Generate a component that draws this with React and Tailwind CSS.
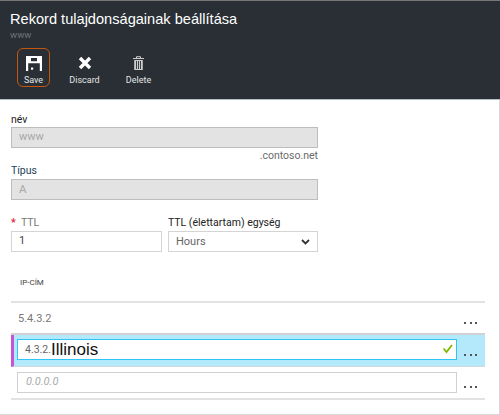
import React from "react";

const f = { fontFamily: 'Roboto, "Liberation Sans", sans-serif' };
const Dots = () => (
  <div className="w-[28px] flex items-center gap-[3.5px] pl-[7px] pt-[9px] shrink-0">
    <span className="w-[2px] h-[2px] bg-[#555]" />
    <span className="w-[2px] h-[2px] bg-[#555]" />
    <span className="w-[2px] h-[2px] bg-[#555]" />
  </div>
);

function Tool({ label, children, active }) {
  return (
    <div className={`w-[33px] h-[39px] flex flex-col items-center rounded-[6px] ${active ? "border border-[#c4560f]" : "border border-transparent"}`}>
      <div className="h-[22px] flex items-end justify-center">{children}</div>
      <span className="text-[9px] leading-[12px] mt-[3px] text-[#e4e6e8] whitespace-nowrap">{label}</span>
    </div>
  );
}

export default function App() {
  return (
    <div className="w-[500px] h-[415px] bg-white overflow-hidden flex flex-col" style={f}>
      <div className="h-[99px] bg-[#292f35] border-t border-[#777] shrink-0 pl-[10px]">
        <div className="text-[14.6px] leading-[20px] text-white mt-[8px]" style={{ fontFamily: '"Liberation Sans", sans-serif' }}>Rekord tulajdonságainak beállítása</div>
        <div className="text-[9.5px] leading-[10px] text-[#6f757a] mt-[1px]">www</div>
        <div className="flex mt-[8px] pl-[7px]">
          <Tool label="Save" active>
            <svg width="16" height="15" viewBox="0 0 16 15">
              <path fillRule="evenodd" d="M0 0h16v15h-2.2V7.2H2.2V15H0zM5 2v3.2h6V2z" fill="#fff" />
              <rect x="5" y="11.5" width="2.2" height="2.2" fill="#fff" />
            </svg>
          </Tool>
          <div className="ml-[18px]">
            <Tool label="Discard">
              <svg width="14" height="14" viewBox="0 0 14 14" className="mb-[1px]">
                <path d="M2 2l10 10M12 2L2 12" stroke="#fff" strokeWidth="3.4" />
              </svg>
            </Tool>
          </div>
          <div className="ml-[21px]">
            <Tool label="Delete">
              <svg width="11" height="14" viewBox="0 0 11 14" className="mb-[1px]">
                <path d="M0 2.5h11M3.5 2V.7h4V2" stroke="#ccc" strokeWidth="1" fill="none" />
                <path d="M1.2 4h8.6v10H1.2z" fill="#ccc" />
                <path d="M3.5 5v8M5.5 5v8M7.5 5v8" stroke="#292f35" strokeWidth="0.9" />
              </svg>
            </Tool>
          </div>
        </div>
      </div>
      <div className="h-[1px] bg-[#b4c0c8] shrink-0" />
      <div className="flex-1 flex border-b border-[#d8d8d8] min-h-0">
        <div className="w-[485px] pl-[11px] shrink-0">
          <div className="w-[307px]">
            <div className="text-[10.5px] leading-[12px] text-[#222] mt-[14px]">név</div>
            <div className="h-[21px] mt-[1px] bg-[#e3e3e3] border-[1.5px] border-[#bdbdbd] pl-[7px] text-[11px] leading-[18px] text-[#a8a8a8]">www</div>
            <div className="text-[10.5px] leading-[14px] text-[#6b6b6b] text-right mt-[1px]">.contoso.net</div>
            <div className="text-[10.5px] leading-[14px] text-[#1d3f57] mt-[1px]">Típus</div>
            <div className="h-[21px] mt-[1px] bg-[#e3e3e3] border-[1.5px] border-[#bdbdbd] pl-[7px] text-[11.5px] leading-[18px] text-[#a8a8a8]">A</div>
            <div className="flex gap-[6px] mt-[16px]">
              <div className="w-[151px]">
                <div className="text-[10.5px] leading-[14px] text-[#777] flex">
                  <span className="text-[#e0263c] font-bold w-[10px]">*</span>
                  <span>TTL</span>
                </div>
                <div className="h-[21px] mt-[1px] border-[1.5px] border-[#d4d4d4] pl-[7px] text-[11px] leading-[18px] text-[#444]">1</div>
              </div>
              <div className="w-[150px]">
                <div className="text-[10.5px] leading-[14px] text-[#222] whitespace-nowrap">TTL (élettartam) egység</div>
                <div className="h-[21px] mt-[1px] border-[1.5px] border-[#d4d4d4] pl-[7px] pr-[7px] text-[11px] leading-[18px] text-[#666] flex justify-between items-center">
                  <span>Hours</span>
                  <svg width="9" height="6" viewBox="0 0 9 6"><path d="M1 1l3.5 3.5L8 1" fill="none" stroke="#333" strokeWidth="1.8" /></svg>
                </div>
              </div>
            </div>
          </div>
          <div className="text-[8px] leading-[10px] text-[#444] pl-[9px] mt-[26px]">IP-CÍM</div>
          <div className="h-[2px] bg-[#e2e2e2] mt-[13px]" />
          <div className="h-[32px] flex border-b-2 border-[#d2d2d2]">
            <div className="flex-1 pl-[7px] pt-[9px] text-[11px] leading-[14px] text-[#777]">5.4.3.2</div>
            <Dots />
          </div>
          <div className="h-[32px] flex bg-[#b3e9fb] border-l-[3px] border-l-[#c554d8] border-b border-b-[#d0d8dc]">
            <div className="flex-1 ml-[3px] mt-[4px] h-[21px] bg-white border-[1.5px] border-[#2fc6f6] flex items-center pl-[7px] relative">
              <span className="text-[10.5px] text-[#666] leading-[18px] w-[26px]">4.3.2.</span>
              <span className="text-[17px] leading-[18px] text-[#111]" style={{ fontFamily: '"Liberation Sans", sans-serif' }}>Illinois</span>
              <svg className="absolute right-[3px] top-[3px]" width="11" height="11" viewBox="0 0 11 11"><path d="M1.5 5.5l3 3.5L10 2" fill="none" stroke="#7fb800" strokeWidth="1.8" /></svg>
            </div>
            <Dots />
          </div>
          <div className="h-[33px] flex border-b-2 border-[#e2e2e2]">
            <div className="flex-1 ml-[6px] mt-[5px] h-[21px] border-[1.5px] border-[#d0d0d0] pl-[8px] text-[11px] leading-[18px] italic text-[#aaa]">0.0.0.0</div>
            <Dots />
          </div>
        </div>
        <div className="w-[15px] border-r border-[#d8d8d8] shrink-0" />
      </div>
    </div>
  );
}
